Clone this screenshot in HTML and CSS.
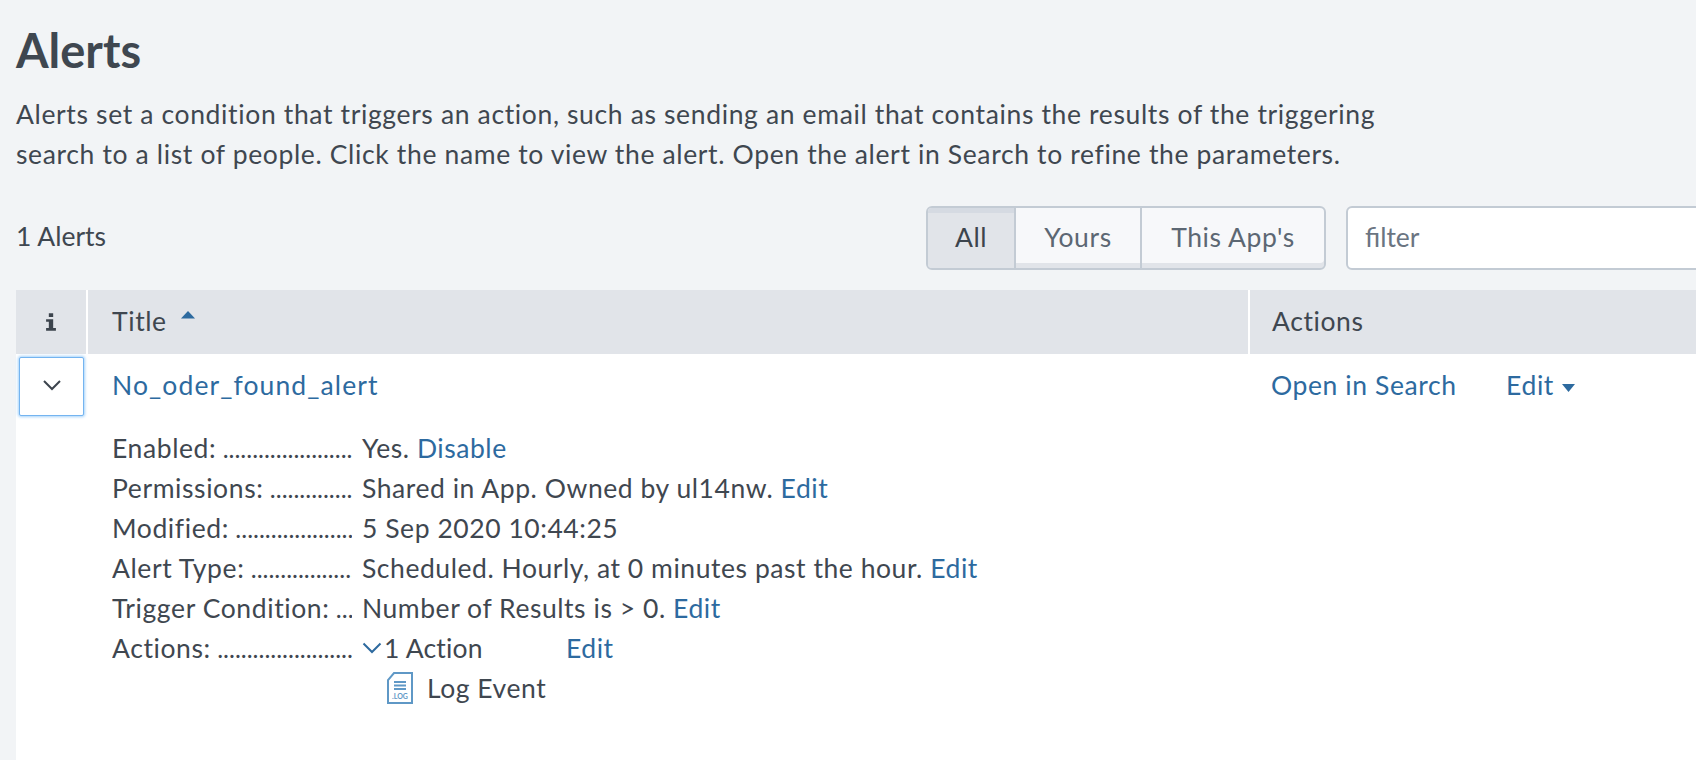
FILE: index.html
```html
<!DOCTYPE html>
<html lang="en">
<head>
  <meta charset="UTF-8" />
  <title>Alerts</title>
  <link rel="stylesheet" href="styles.css">
</head>
<body>
  <h1>Alerts</h1>
  <p class="intro">Alerts set a condition that triggers an action, such as sending an email that contains the results of the triggering<br/>search to a list of people. Click the name to view the alert. Open the alert in Search to refine the parameters.</p>

  <div class="toolbar">
    <span class="count">1 Alerts</span>
    <div class="tabs">
      <span class="tab active">All</span>
      <span class="tab">Yours</span>
      <span class="tab">This App's</span>
    </div>
    <div class="filter">filter</div>
  </div>

  <table class="alerts">
    <thead>
      <tr>
        <th class="col-info"><svg width="12" height="18" viewBox="0 0 11 16"><path fill="#3c444d" d="M3.500 0h4v3.400h-4zM1 5.400h6.500v8.200H10V16H1v-2.400h2.500V7.800H1z"/></svg></th>
        <th class="col-title">Title <svg class="sort" width="14" height="8" viewBox="0 0 14 8"><path fill="#2d6a9f" d="M7 0l7 7.500H0z"/></svg></th>
        <th class="col-actions">Actions</th>
      </tr>
    </thead>
    <tbody>
      <tr>
        <td class="cell-toggle">
          <button class="toggle"><svg width="20" height="12" viewBox="0 0 20 12"><path fill="none" stroke="#3c444d" stroke-width="2" d="M2 2l8 8 8-8"/></svg></button>
        </td>
        <td class="cell-main">
          <a class="name" href="#">No_oder_found_alert</a>
          <dl class="details">
            <div class="row"><dt>Enabled:</dt><dd>Yes. <a href="#">Disable</a></dd></div>
            <div class="row"><dt>Permissions:</dt><dd>Shared in App. Owned by ul14nw. <a href="#">Edit</a></dd></div>
            <div class="row"><dt>Modified:</dt><dd>5 Sep 2020 10:44:25</dd></div>
            <div class="row"><dt>Alert Type:</dt><dd>Scheduled. Hourly, at 0 minutes past the hour. <a href="#">Edit</a></dd></div>
            <div class="row"><dt>Trigger Condition:</dt><dd>Number of Results is &gt; 0. <a href="#">Edit</a></dd></div>
            <div class="row">
              <dt>Actions:</dt>
              <dd class="action-line">
                <svg width="20" height="12" viewBox="0 0 20 12"><path fill="none" stroke="#2d6a9f" stroke-width="2" d="M1.500 1.500L10 10l8.500-8.500"/></svg>
                <span class="action-count">1 Action</span>
                <a href="#">Edit</a>
              </dd>
            </div>
            <div class="row">
              <dt class="blank"></dt>
              <dd class="log-line">
                <svg width="28" height="34" viewBox="0 0 28 34">
                  <path fill="#fff" stroke="#5f98c6" stroke-width="2" d="M8 2h18v30H2V9z"/>
                  <path stroke="#5f98c6" stroke-width="2" d="M8 11h12M8 14.500h12M8 18h12"/>
                  <text class="log-text" x="14" y="28" text-anchor="middle">.LOG</text>
                </svg>
                Log Event
              </dd>
            </div>
          </dl>
        </td>
        <td class="cell-actions">
          <a href="#">Open in Search</a>
          <a class="edit" href="#">Edit <svg width="13" height="8" viewBox="0 0 13 8"><path fill="#2d6a9f" d="M0 0h13L6.500 8z"/></svg></a>
        </td>
      </tr>
    </tbody>
  </table>
</body>
</html>
```

FILE: styles.css
```css
html, body {
  height: 100%;
}
body {
  margin: 0;
  padding: 0 0 0 16px;
  overflow: hidden;
  background: #f2f4f6;
  font-family: Lato, "Open Sans", sans-serif;
  font-size: 26.5px;
  letter-spacing: 0.6px;
  color: #3f4750;
}
a {
  color: #2d6a9f;
  text-decoration: none;
}
h1 {
  margin: 0;
  padding-top: 22px;
  font-size: 47px;
  line-height: 56px;
  font-weight: 700;
  letter-spacing: 0;
}
.intro {
  margin: 16px 0 0;
  line-height: 40px;
  letter-spacing: 0.64px;
}
.toolbar {
  display: flex;
  align-items: center;
  height: 64px;
  margin-top: 32px;
}
.count {
  width: 910px;
  padding-bottom: 4px;
  letter-spacing: 0;
}
.tabs {
  display: flex;
  width: 400px;
  height: 64px;
  box-sizing: border-box;
  border: 2px solid #c3cbd4;
  border-radius: 6px;
  overflow: hidden;
  background: #f7f8fa;
  box-shadow: inset 0 -5px 0 #e1e4e9;
  color: #5c6773;
}
.tab {
  display: flex;
  align-items: center;
  justify-content: center;
  width: 124px;
  padding-bottom: 2px;
  border-left: 2px solid #c3cbd4;
}
.tab:last-child {
  flex: 1;
}
.tab.active {
  width: 86px;
  flex: none;
  border-left: 0;
  background: #e1e4e9;
  color: #3c444d;
  box-shadow: inset 0 5px 0 #d5dae2;
}
.filter {
  flex: 1;
  height: 64px;
  margin-left: 20px;
  margin-right: -12px;
  padding: 0 0 2px 17px;
  box-sizing: border-box;
  display: flex;
  align-items: center;
  border: 2px solid #c3cbd4;
  border-radius: 6px;
  background: #fff;
  color: #6b7582;
  letter-spacing: 0;
}
.alerts {
  width: 1680px;
  height: 470px;
  margin-top: 20px;
  border-collapse: collapse;
  table-layout: fixed;
  background: #fff;
}
.alerts th {
  height: 62px;
  padding: 0 0 2px 24px;
  background: #e1e4e9;
  border-left: 2px solid #fff;
  text-align: left;
  font-weight: 400;
}
.alerts th.col-info {
  width: 70px;
  padding: 0 0 2px;
  border-left: 0;
  text-align: center;
}
.alerts th.col-title {
  width: 1136px;
}
.alerts th.col-actions {
  padding-left: 22px;
}
.sort {
  margin: 0 0 12px 7px;
}
.alerts td {
  vertical-align: top;
  padding: 0;
}
.cell-toggle {
  padding: 3px 0 0 3px !important;
}
.toggle {
  display: block;
  width: 65px;
  height: 59px;
  padding: 0;
  box-sizing: border-box;
  background: #fff;
  border: 1px solid #74b4f0;
  border-radius: 2px;
  box-shadow: 0 0 3px 1px #a5d2fa;
}
.cell-main {
  padding: 11px 0 0 25px !important;
  line-height: 40px;
}
.name {
  display: block;
  letter-spacing: 1.1px;
}
.details {
  margin: 23px 0 0;
}
.row {
  display: flex;
  height: 40px;
}
.row dd {
  margin: 0 0 0 10px;
  letter-spacing: 0.55px;
}
.row dt {
  width: 240px;
  flex: none;
  overflow: hidden;
  white-space: nowrap;
}
.row dt::after {
  content: " ............................................................";
  font-size: 25px;
  letter-spacing: 0;
}
.row dt.blank::after {
  content: "";
}
.action-line {
  display: flex;
  align-items: center;
}
.action-line svg {
  margin-right: 2px;
}
.action-count {
  width: 182px;
  letter-spacing: 0.2px;
}
.log-line {
  display: flex;
  align-items: center;
  padding-left: 24px;
}
.log-line svg {
  margin-right: 13px;
}
.log-text {
  font-size: 7px;
  font-weight: 700;
  letter-spacing: 0;
  fill: #5f98c6;
}
.cell-actions {
  padding: 11px 0 0 22px !important;
  line-height: 40px;
  white-space: nowrap;
}
.edit {
  margin-left: 42px;
}
.edit svg {
  margin: 0 0 3px 1px;
}
```
